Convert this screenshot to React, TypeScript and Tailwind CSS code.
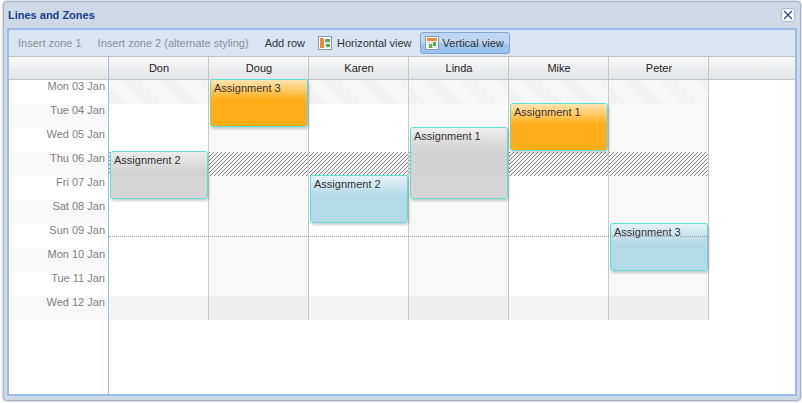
const F = "font-['Liberation_Sans',Arial,sans-serif]";
const people = ["Don", "Doug", "Karen", "Linda", "Mike", "Peter"];
const days = ["Mon 03 Jan", "Tue 04 Jan", "Wed 05 Jan", "Thu 06 Jan", "Fri 07 Jan", "Sat 08 Jan", "Sun 09 Jan", "Mon 10 Jan", "Tue 11 Jan", "Wed 12 Jan"];
const TONES: Record<string, string> = {
  orange: "bg-[linear-gradient(#ffe3ade6_0px,#ffa500e6_20px,#ffa500e6_100%)]",
  gray: "bg-[linear-gradient(#eeeeeee6_0px,#d1d1d1e6_20px,#d1d1d1e6_100%)]",
  blue: "bg-[linear-gradient(#e2f1f6e6_0px,#acd5e5e6_20px,#acd5e5e6_100%)]",
};
const events = [
  { col: 0, row: 3, span: 2, tone: "gray", label: "Assignment 2" },
  { col: 1, row: 0, span: 2, tone: "orange", label: "Assignment 3" },
  { col: 2, row: 4, span: 2, tone: "blue", label: "Assignment 2" },
  { col: 3, row: 2, span: 3, tone: "gray", label: "Assignment 1" },
  { col: 4, row: 1, span: 2, tone: "orange", label: "Assignment 1" },
  { col: 5, row: 6, span: 2, tone: "blue", label: "Assignment 3" },
];
const HATCH = "bg-[repeating-linear-gradient(135deg,#808080_0px,#808080_1px,#f8f8f8_1px,#f8f8f8_2.83px)]";
const STRIPE = "bg-[repeating-linear-gradient(45deg,#f2f2f2_0px,#f2f2f2_13px,#f7f7f7_13px,#f7f7f7_26px)]";

function Cell({ row, col }: { row: number; col: number }) {
  let cls = col % 2 === 1 ? "bg-[#f8f8f8]" : "bg-white";
  if (row === 0) cls = STRIPE;
  if (row === 3) cls = HATCH;
  if (row === 9) cls = col % 2 === 1 ? "bg-[#eeeeee]" : "bg-[#f4f4f4]";
  return <div className={`h-6 w-full ${cls}`} />;
}

function Icon({ vertical }: { vertical?: boolean }) {
  return (
    <svg width="14" height="14" viewBox="0 0 14 14" className="shrink-0">
      <rect x="0.5" y="0.5" width="13" height="13" fill="#fff" stroke="#7f9db9" />
      {vertical ? (
        <g>
          <rect x="2" y="2" width="10" height="3" fill="#f08a3c" />
          <path d="M2 6.5H12M2 9H12M2 11.5H12M4.5 5V12M7 5V12M9.5 5V12" stroke="#d3dce6" strokeWidth="1" />
          <rect x="4" y="8" width="3" height="4" fill="#5fae4a" />
          <rect x="8" y="6" width="3" height="4" fill="#5fae4a" />
        </g>
      ) : (
        <g>
          <rect x="2" y="2" width="4" height="10" fill="#f08a3c" />
          <path d="M7 3.5H12M7 6.5H12M7 9.5H12M9.5 2V12" stroke="#d3dce6" strokeWidth="1" />
          <rect x="7" y="3" width="5" height="3" fill="#5fae4a" />
          <rect x="8" y="8" width="4" height="3" fill="#5fae4a" />
        </g>
      )}
    </svg>
  );
}

function ToolButton({ label, disabled, active, icon, className }: { label: string; disabled?: boolean; active?: boolean; icon?: "h" | "v"; className?: string }) {
  return (
    <div
      className={`flex h-[22px] items-center rounded-[3px] border pl-[4px] text-[11px] leading-none ${
        active
          ? "gap-[4px] border-[#82a6d3] bg-[linear-gradient(#bed6f0_0px,#bed6f0_10px,#9cc4ee_11px,#9cc4ee_100%)] pr-[5px] text-[#333]"
          : "gap-[5px] border-transparent pr-[4px]"
      } ${disabled ? "text-[#8e9093]" : "text-[#333]"} ${className ?? ""}`}
    >
      {icon && <Icon vertical={icon === "v"} />}
      <span>{label}</span>
    </div>
  );
}

export default function App() {
  return (
    <div className={`${F} h-[403px] w-[802px] overflow-hidden bg-white pl-[3px] pt-[1px]`}>
      <div className="flex h-[400px] w-[798px] flex-col rounded-[4px] border border-[#a6b2c9] bg-[#cdd9e6] pb-[4px] pl-[3px] pr-[3px] shadow-[0_0_3px_rgba(0,0,0,0.35)]">
        <div className="flex h-[26px] shrink-0 items-center justify-between">
          <span className="ml-[1px] text-[11px] font-bold leading-none text-[#15428b]">Lines and Zones</span>
          <div className="mr-[2px] flex h-[14px] w-[14px] items-center justify-center rounded-[3px] border border-[#9dbde6] bg-white">
            <svg width="10" height="10" viewBox="0 0 10 10">
              <path d="M1 1L9 9M9 1L1 9" stroke="#2c4a8a" strokeWidth="1.3" fill="none" />
            </svg>
          </div>
        </div>
        <div className="flex min-h-0 flex-1 flex-col border-2 border-[#99bce8] bg-white">
          <div className="flex h-[26px] shrink-0 items-center bg-[#d9e5f3] pl-[4px]">
            <ToolButton label="Insert zone 1" disabled />
            <ToolButton label="Insert zone 2 (alternate styling)" disabled className="ml-[6px]" />
            <ToolButton label="Add row" className="ml-[6px]" />
            <ToolButton label="Horizontal view" icon="h" className="ml-[3px]" />
            <ToolButton label="Vertical view" icon="v" active className="ml-[3px]" />
          </div>
          <div className="flex h-6 shrink-0 border-y border-[#c5c5c5] bg-[linear-gradient(#f9f9f9,#e3e4e6)] text-[11px] leading-none text-[#222]">
            <div className="w-[100px] shrink-0 border-r border-[#99bce8]" />
            {people.map((p) => (
              <div key={p} className="flex w-[100px] shrink-0 items-center justify-center border-r border-[#c5c5c5] pl-[1px]">
                {p}
              </div>
            ))}
          </div>
          <div className="flex min-h-0 flex-1">
            <div className="w-[100px] shrink-0 border-r border-[#99bce8]">
              {days.map((d, i) => (
                <div key={d} className={`h-6 pr-[3px] text-right text-[11px] leading-[13px] text-[#808080] ${i % 2 === 1 ? "bg-[#f8f8f8]" : "bg-white"}`}>
                  {d}
                </div>
              ))}
            </div>
            <div className="relative flex-1">
              <div className="flex">
                {people.map((p, col) => (
                  <div key={p} className="w-[100px] shrink-0 border-r border-[#c8c8c8]">
                    {days.map((d, row) => (
                      <Cell key={d} row={row} col={col} />
                    ))}
                  </div>
                ))}
              </div>
              {events.map((e) => (
                <div
                  key={`${e.col}-${e.row}`}
                  style={{ left: e.col * 100 + 1, top: e.row * 24 - 1, height: e.span * 24 }}
                  className={`absolute w-[98px] rounded-[3px] border border-[#5fe0d4] px-[3px] pt-[2px] text-[11px] leading-[13px] text-[#333] shadow-[1px_2px_3px_rgba(0,0,0,0.2)] ${TONES[e.tone]}`}
                >
                  {e.label}
                </div>
              ))}
              <div className="absolute left-0 top-[156px] h-0 w-[600px] border-t border-dotted border-[#999]" />
            </div>
          </div>
        </div>
      </div>
    </div>
  );
}
